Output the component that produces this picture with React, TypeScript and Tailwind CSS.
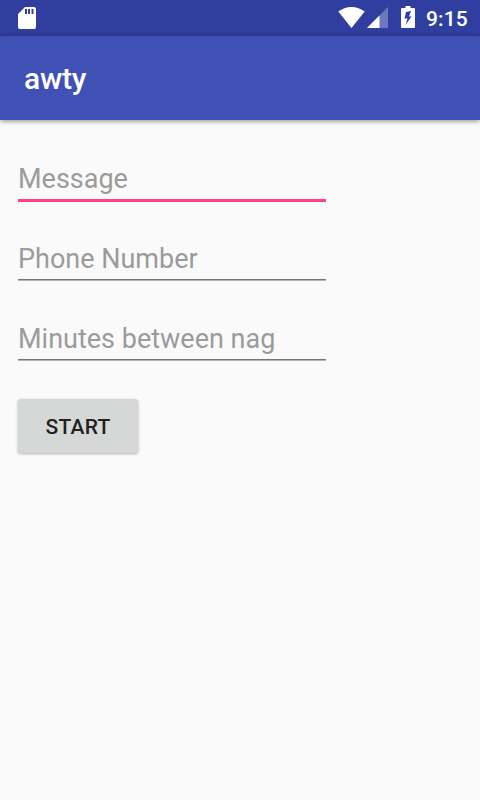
const fields = [
  { hint: "Message", focused: true },
  { hint: "Phone Number", focused: false },
  { hint: "Minutes between nag", focused: false },
];

function StatusBar() {
  return (
    <div className="flex h-9 items-center bg-[#303f9f] pl-[18px] pr-3 text-white">
      <svg className="h-[22px] w-[18px]" viewBox="0 0 18 22" fill="currentColor">
        <path fillRule="evenodd" d="M7 0h9a2 2 0 0 1 2 2v18a2 2 0 0 1-2 2H2a2 2 0 0 1-2-2V7zM7 2v5h2V2zM10 2v5h2V2zM13.500 2v5h2V2z" />
      </svg>
      <div className="ml-auto flex h-full items-start">
        <svg className="mt-[7px] h-[21px] w-[27px]" viewBox="0 0 27 21" fill="currentColor">
          <path d="M13.500 21 .3 4.600C4 1.700 8.500 0 13.500 0s9.500 1.700 13.200 4.600z" />
        </svg>
        <svg className="ml-0.5 mt-[7px] h-[21px] w-[21px]" viewBox="0 0 21 21" fill="currentColor">
          <path opacity=".3" d="M0 21 21 0v21z" />
          <path d="M0 21 12.500 8.500V21z" />
        </svg>
        <svg className="ml-[13px] mt-1.5 h-[22px] w-3.5" viewBox="0 0 14 22" fill="currentColor">
          <path fillRule="evenodd" d="M4.500 0h5v2H13a1 1 0 0 1 1 1v18a1 1 0 0 1-1 1H1a1 1 0 0 1-1-1V3a1 1 0 0 1 1-1h3.500zM5 6L3.500 12.500h3L4.500 19l6-8.500H8L10 5z" />
        </svg>
        <span className="ml-[11px] mt-px w-[42px] whitespace-nowrap text-[21px] font-medium leading-9 tracking-[0.1px]">9:15</span>
      </div>
    </div>
  );
}

export default function App() {
  return (
    <div className="h-[800px] w-[480px] overflow-hidden bg-[#fafafa] font-['Roboto',sans-serif]">
      <StatusBar />
      <header className="flex h-[84px] items-center bg-[#3f51b5] pl-6 pt-0.5 shadow-[0_1px_5px_rgba(0,0,0,0.45)]">
        <h1 className="text-[30px] font-medium leading-none tracking-[-0.2px] text-white">awty</h1>
      </header>
      <main className="flex flex-col items-start pl-[18px] pt-10">
        {fields.map(({ hint, focused }) => (
          <div key={hint} className="h-20 w-[308px]">
            <input
              aria-label={hint}
              placeholder={hint}
              className={`block w-full px-0 pt-0 pb-0.5 text-[27px] leading-[37px] outline-none placeholder:text-[#9b9b9b] ${focused ? "h-[42px] border-b-3 border-[#ff4081]" : "h-10 border-b border-[#757575] shadow-[0_1px_0_#b5b5b5]"}`}
            />
          </div>
        ))}
        <button className="-mt-px h-[54px] w-[120px] rounded-[3px] bg-[#d6d7d7] pt-[3px] text-[21px] font-medium tracking-[0.25px] text-[#212121] shadow-[0_1px_3px_rgba(0,0,0,0.3)]">START</button>
      </main>
    </div>
  );
}
